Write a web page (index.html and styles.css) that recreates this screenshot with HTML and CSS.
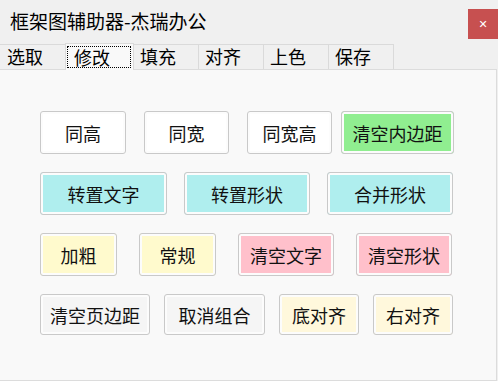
FILE: index.html
```html
<!DOCTYPE html>
<html lang="zh">
<head>
    <meta charset="UTF-8">
    <title>框架图辅助器-杰瑞办公</title>
    <link rel="stylesheet" href="styles.css">
</head>
<body>
    <div class="window">
        <div class="titlebar">
            <span class="title">框架图辅助器-杰瑞办公</span>
            <button class="close">&#x2715;</button>
        </div>

        <div class="tabs">
            <div class="tab">选取</div>
            <div class="tab active"><span class="focus">修改</span></div>
            <div class="tab">填充</div>
            <div class="tab">对齐</div>
            <div class="tab">上色</div>
            <div class="tab">保存</div>
        </div>

        <div class="panel">
            <div class="row row1">
                <button class="btn white w86">同高</button>
                <button class="btn white w85">同宽</button>
                <button class="btn white w85">同宽高</button>
                <button class="btn green w113 tight">清空内边距</button>
            </div>
            <div class="row row2">
                <button class="btn cyan w127">转置文字</button>
                <button class="btn cyan w126">转置形状</button>
                <button class="btn cyan w126">合并形状</button>
            </div>
            <div class="row row3">
                <button class="btn lemon w77">加粗</button>
                <button class="btn lemon w77">常规</button>
                <button class="btn pink w96">清空文字</button>
                <button class="btn pink w96">清空形状</button>
            </div>
            <div class="row row4">
                <button class="btn smoke w110">清空页边距</button>
                <button class="btn smoke w101">取消组合</button>
                <button class="btn silk w80">底对齐</button>
                <button class="btn silk w80">右对齐</button>
            </div>
        </div>
    </div>
</body>
</html>
```

FILE: styles.css
```css
body {
    margin: 0;
    padding: 0;
    background: #f0f0f0;
    font-family: "Noto Sans CJK SC", "Microsoft YaHei", sans-serif;
    color: #111;
}
.window {
    width: 498px;
    height: 381px;
    overflow: hidden;
    background: #f0f0f0;
}
.titlebar {
    height: 43px;
    display: flex;
    align-items: flex-start;
    justify-content: space-between;
}
.title {
    font-size: 19px;
    line-height: 20px;
    margin: 11px 0 0 10px;
    color: #000;
}
.close {
    width: 30px;
    height: 30px;
    margin-top: 9px;
    border: none;
    padding: 0;
    background: #c75050;
    color: #fff;
    font-size: 11px;
    font-weight: bold;
    font-family: "DejaVu Sans", sans-serif;
}
.tabs {
    display: flex;
    align-items: flex-end;
    height: 26px;
    position: relative;
    z-index: 1;
}
.tab {
    box-sizing: border-box;
    width: 66px;
    height: 25px;
    margin-right: -1px;
    border: 1px solid #dadada;
    border-bottom: none;
    background: #f0f0f0;
    font-size: 18px;
    line-height: 22px;
    padding-left: 6px;
    color: #000;
}
.tab:first-child {
    width: 66px;
    border-left: none;
    padding-left: 7px;
}
.tab.active {
    width: 69px;
    height: 27px;
    margin-bottom: -1px;
    background: #f9f9f9;
    padding: 2px 0 0 1px;
    line-height: 20px;
}
.focus {
    display: inline-block;
    box-sizing: border-box;
    width: 64px;
    height: 22px;
    border: 1px dotted #000;
    padding-left: 6px;
}
.panel {
    box-sizing: border-box;
    width: 497px;
    height: 312px;
    background: #f9f9f9;
    border: 1px solid #dcdcdc;
    border-left: none;
    padding: 41px 0 0 40px;
}
.row {
    display: flex;
    margin-bottom: 18px;
}
.row1 { gap: 18px; }
.row2 { gap: 17px; }
.row3 { gap: 22px; }
.row4 { gap: 14px; margin-top: 3px; }
.tight { margin-left: -9px; }

.btn {
    box-sizing: border-box;
    height: 43px;
    padding: 0;
    border: 1px solid #c9c9c9;
    border-radius: 3px;
    box-shadow: inset 0 0 0 2px #fcfcfc;
    font-family: "Noto Sans CJK SC", sans-serif;
    font-size: 18px;
    color: #111;
}
.row4 .btn { height: 41px; }

.white { background: #fff; }
.green { background: #90ee90; }
.cyan { background: #afeeee; }
.lemon { background: #fffacd; }
.pink { background: #ffc0cb; }
.smoke { background: #f5f5f5; }
.silk { background: #fff8dc; }

.w77 { width: 77px; }
.w80 { width: 80px; }
.w85 { width: 85px; }
.w86 { width: 86px; }
.w96 { width: 96px; }
.w101 { width: 101px; }
.w110 { width: 110px; }
.w113 { width: 113px; }
.w126 { width: 126px; }
.w127 { width: 127px; }
```
